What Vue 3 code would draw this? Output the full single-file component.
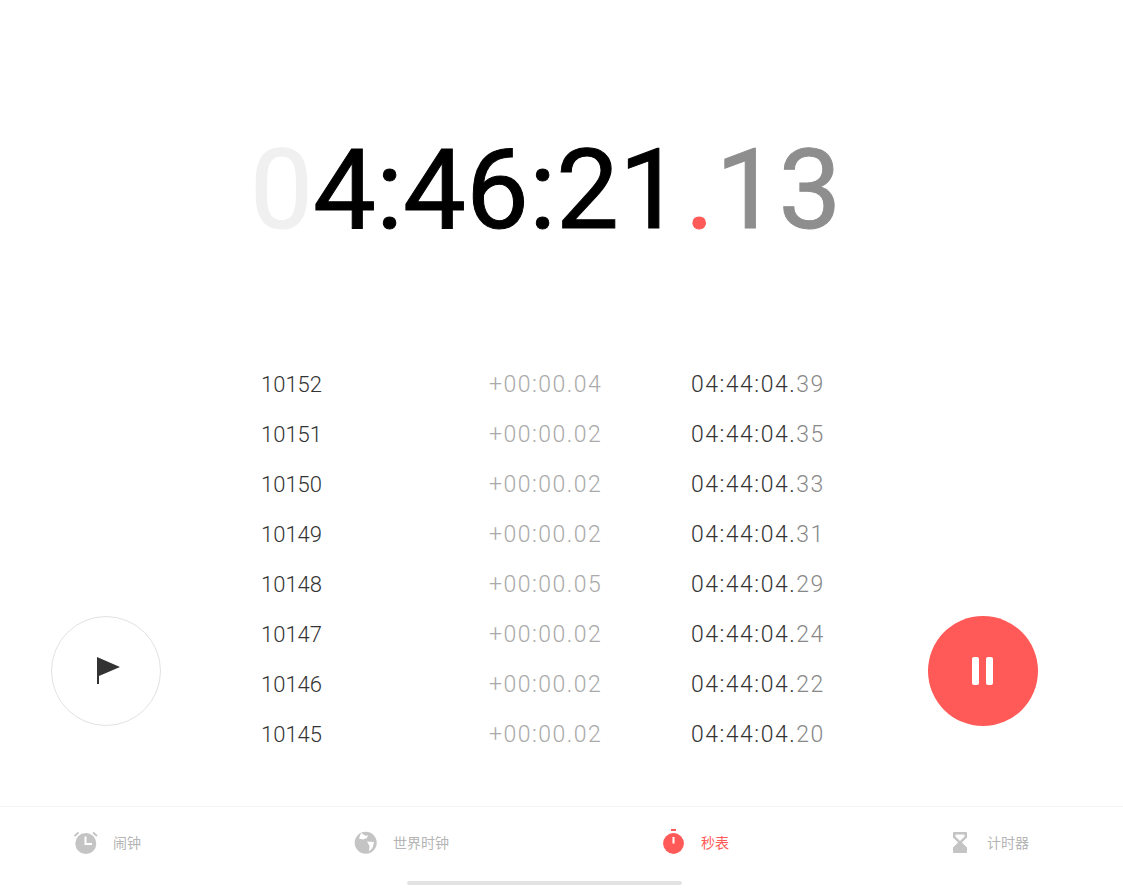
<template>
  <div class="page">
    <div class="clock">
      <span class="faded">0</span>4:46:21<span class="dot">.</span><span class="hundredths">13</span>
    </div>

    <div class="main">
      <button class="round-btn lap-btn">
        <svg class="flag" width="24" height="28" viewBox="0 0 24 28">
          <path d="M0 0 L23 10 L2 19 V27 H0 Z" fill="#333" />
        </svg>
      </button>

      <div class="laps">
        <div v-for="lap in laps" :key="lap.no" class="lap">
          <span class="lap-no">{{ lap.no }}</span>
          <span class="lap-delta">{{ lap.delta }}</span>
          <span class="lap-total">04:44:04.<span class="lap-ms">{{ lap.ms }}</span></span>
        </div>
      </div>

      <button class="round-btn pause-btn">
        <span class="bar"></span>
        <span class="bar"></span>
      </button>
    </div>

    <div class="tabs">
      <div class="tab">
        <svg width="24" height="24" viewBox="0 0 24 24">
          <circle cx="11.8" cy="13.5" r="10.5" fill="#c4c4c4" />
          <path d="M11.5 6.5 V14 H18" fill="none" stroke="#fff" stroke-width="2" />
          <path d="M0.5 6 L4.5 2.5 M23 6 L19 2.5" fill="none" stroke="#c4c4c4" stroke-width="1.8" />
        </svg>
        <span>闹钟</span>
      </div>
      <div class="tab">
        <svg width="24" height="24" viewBox="0 0 24 24">
          <circle cx="11.7" cy="12.7" r="11" fill="#c4c4c4" />
          <path d="M7 3 L12 6 L14 5 L13 8 L9 9.5 L5 8.5 Z M13 11.5 L20 12 L18.5 18 L15 21.5 L15.5 16 Z" fill="#fff" />
        </svg>
        <span>世界时钟</span>
      </div>
      <div class="tab active">
        <svg width="24" height="26" viewBox="0 0 24 26">
          <rect x="9" y="0" width="5" height="2" fill="#ff5a57" />
          <circle cx="11.5" cy="14.5" r="10.4" fill="#ff5a57" />
          <rect x="10.5" y="8" width="2" height="6.5" fill="#fff" />
        </svg>
        <span>秒表</span>
      </div>
      <div class="tab">
        <svg width="24" height="24" viewBox="0 0 24 24">
          <path d="M6 2 H18 Q19 2 19 3 V7.5 L14 12.5 L19 17.5 V22 Q19 23 18 23 H6 Q5 23 5 22 V17.5 L10 12.5 L5 7.5 V3 Q5 2 6 2 Z" fill="#c4c4c4" />
          <path d="M7.5 4.5 H16.5 V6.5 L12 11 L7.5 6.5 Z" fill="#fff" />
        </svg>
        <span>计时器</span>
      </div>
    </div>

    <div class="home-bar"></div>
  </div>
</template>

<script setup>
const laps = [
  { no: 10152, delta: '+00:00.04', ms: '39' },
  { no: 10151, delta: '+00:00.02', ms: '35' },
  { no: 10150, delta: '+00:00.02', ms: '33' },
  { no: 10149, delta: '+00:00.02', ms: '31' },
  { no: 10148, delta: '+00:00.05', ms: '29' },
  { no: 10147, delta: '+00:00.02', ms: '24' },
  { no: 10146, delta: '+00:00.02', ms: '22' },
  { no: 10145, delta: '+00:00.02', ms: '20' }
]
</script>

<style>
html,
body {
  margin: 0;
  background: #fff;
}
</style>

<style scoped>
.page {
  position: relative;
  width: 1123px;
  height: 889px;
  overflow: hidden;
  display: flex;
  flex-direction: column;
  background: #fff;
  font-family: Roboto, "Noto Sans CJK SC", sans-serif;
}

.clock {
  height: 130px;
  margin-top: 125px;
  padding-left: 250px;
  font-size: 112px;
  font-weight: 400;
  -webkit-text-stroke: 1px currentColor;
  line-height: 130px;
  color: #000;
  white-space: nowrap;
}

.faded {
  color: #f0f0f0;
}

.dot {
  margin: 0 1px 0 3px;
  color: #ff5a57;
}

.hundredths {
  color: #8e8e8e;
}

.main {
  flex: 1;
  display: flex;
  align-items: flex-start;
  padding: 104px 85px 0 51px;
}

.laps {
  width: 566px;
  margin: 0 auto 0 100px;
}

.lap {
  height: 50px;
  display: grid;
  grid-template-columns: 228px 202px auto;
  align-items: center;
  font-size: 23px;
  font-weight: 300;
  letter-spacing: 1.5px;
  color: #333;
}

.lap-no {
  padding-top: 1px;
  font-size: 22px;
  letter-spacing: 0;
}

.lap-delta {
  color: #aaa;
}

.lap-ms {
  color: #888;
}

.round-btn {
  flex: none;
  width: 110px;
  height: 110px;
  margin-top: 257px;
  padding: 0;
  border-radius: 50%;
  display: flex;
  align-items: center;
  justify-content: center;
}

.lap-btn {
  background: #fff;
  border: 1.5px solid #e2e2e2;
}

.flag {
  margin-left: 6px;
}

.pause-btn {
  gap: 7px;
  padding-right: 1px;
  border: none;
  background: #ff5a57;
}

.bar {
  width: 7px;
  height: 28px;
  border-radius: 2px;
  background: #fff;
}

.tabs {
  height: 83px;
  box-sizing: border-box;
  border-top: 1px solid #f5f5f5;
  padding: 0 0 12px 74px;
  display: grid;
  grid-template-columns: 280px 308px 286px auto;
  align-items: center;
}

.tab {
  display: flex;
  align-items: center;
  gap: 15px;
  font-size: 14px;
  color: #b5b5b5;
}

.tab.active {
  color: #ff5a57;
}

.home-bar {
  position: absolute;
  left: 407px;
  bottom: 4px;
  width: 275px;
  height: 4px;
  border-radius: 2px;
  background: #e3e3e3;
}
</style>
